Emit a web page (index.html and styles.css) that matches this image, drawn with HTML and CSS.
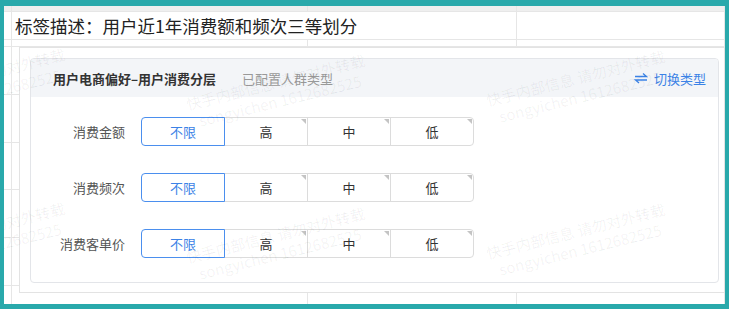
FILE: index.html
```html
<!DOCTYPE html>
<html lang="zh-CN">
  <head>
    <meta charset="UTF-8" />
    <meta name="viewport" content="width=device-width, initial-scale=1.0" />
    <title>标签描述</title>
    <link rel="stylesheet" href="styles.css">
  </head>
  <body>
    <div class="frame">
      <div class="cell top"></div>
      <div class="cell top"></div>
      <div class="cell top"></div>
      <div class="cell top"></div>

      <div class="cell"></div>
      <div class="cell title-cell">标签描述：用户近1年消费额和频次三等划分</div>
      <div class="cell"></div>

      <div class="cell"></div>
      <div class="cell"></div>
      <div class="cell"></div>
      <div class="cell"></div>

      <div class="main-row">
        <div class="rail">
          <div class="rail-row"><span></span><span></span></div>
          <div class="rail-row"><span></span><span></span></div>
          <div class="rail-row"><span></span><span></span></div>
          <div class="rail-row"><span></span><span></span></div>
          <div class="rail-row"><span></span><span></span></div>
          <div class="rail-row"><span></span><span></span></div>
        </div>
        <div class="box">
          <div class="card">
            <div class="card-head">
              <span class="card-title">用户电商偏好–用户消费分层</span>
              <span class="card-sub">已配置人群类型</span>
              <a class="switch">
                <svg width="14" height="12" viewBox="0 0 14 12" fill="none" stroke="currentColor" stroke-width="1.3">
                  <path d="M1 4.5H12.5L9 1.5" />
                  <path d="M13 8H1.5L5 11" />
                </svg>
                切换类型
              </a>
            </div>
            <div class="card-body">
              <div class="field">
                <label class="field-label">消费金额</label>
                <div class="seg">
                  <span class="opt on">不限</span>
                  <span class="opt">高</span>
                  <span class="opt">中</span>
                  <span class="opt last">低</span>
                </div>
              </div>
              <div class="field">
                <label class="field-label">消费频次</label>
                <div class="seg">
                  <span class="opt on">不限</span>
                  <span class="opt">高</span>
                  <span class="opt">中</span>
                  <span class="opt last">低</span>
                </div>
              </div>
              <div class="field">
                <label class="field-label">消费客单价</label>
                <div class="seg">
                  <span class="opt on">不限</span>
                  <span class="opt">高</span>
                  <span class="opt">中</span>
                  <span class="opt last">低</span>
                </div>
              </div>
            </div>
          </div>
        </div>
      </div>

      <div class="cell end"></div>
      <div class="cell end"></div>
      <div class="cell end"></div>
      <div class="cell end"></div>

      <div class="wm w1">快手内部信息 请勿对外转载<br />songyichen 1612682525</div>
      <div class="wm w2">快手内部信息 请勿对外转载<br />songyichen 1612682525</div>
      <div class="wm w3">快手内部信息 请勿对外转载<br />songyichen 1612682525</div>
      <div class="wm w4">快手内部信息 请勿对外转载<br />songyichen 1612682525</div>
      <div class="wm w5">快手内部信息 请勿对外转载<br />songyichen 1612682525</div>
      <div class="wm w6">快手内部信息 请勿对外转载<br />songyichen 1612682525</div>
    </div>
  </body>
</html>
```

FILE: styles.css
```css
* {
  box-sizing: border-box;
}
html,
body {
  height: 100%;
}
body {
  margin: 0;
  padding: 6px 4px 5px 4px;
  background-color: #29a9ab;
  font-family: "Noto Sans CJK SC", "Noto Sans", sans-serif;
  color: #333;
  overflow: hidden;
}
.frame {
  position: relative;
  height: 298px;
  background-color: #fff;
  display: grid;
  grid-template-columns: 8px 296px 209px 1fr;
  grid-template-rows: 6px 28px 7px 246px 11px;
  overflow: hidden;
}
.cell {
  border-right: 1px solid #e6e6e6;
  border-bottom: 1px solid #e6e6e6;
}
.cell.top {
  background-color: #efefef;
}
.cell.end {
  border-bottom: none;
}
.title-cell {
  grid-column: span 2;
  padding-left: 3px;
  font-size: 17.5px;
  line-height: 27px;
  color: #222;
  white-space: nowrap;
}
.main-row {
  grid-column: 1 / -1;
  display: flex;
}
.rail {
  width: 15px;
  display: flex;
  flex-direction: column;
}
.rail-row {
  flex: 1;
  display: flex;
  border-bottom: 1px solid #e6e6e6;
}
.rail-row:last-child {
  flex: 0 0 7px;
  border-bottom: none;
}
.rail-row span:first-child {
  width: 8px;
  border-right: 1px solid #e6e6e6;
}
.box {
  flex: 1;
  border: 1px solid #e3e3e3;
  padding: 10px 5px 9px 10px;
  display: flex;
}
.card {
  flex: 1;
  border: 1px solid #e3e5e9;
  border-radius: 4px;
  display: flex;
  flex-direction: column;
}
.card-head {
  height: 38px;
  background-color: #f3f5f8;
  border-radius: 3px 3px 0 0;
  display: flex;
  align-items: center;
  padding: 0 12px 0 22px;
  font-size: 13px;
}
.card-title {
  font-weight: 700;
  color: #333;
}
.card-sub {
  margin-left: 26px;
  color: #999;
}
.switch {
  margin-left: auto;
  display: flex;
  align-items: center;
  gap: 6px;
  color: #3b82e6;
}
.card-body {
  padding: 20px 0 0 0;
  display: flex;
  flex-direction: column;
  gap: 27px;
}
.field {
  display: flex;
  align-items: center;
  height: 29px;
}
.field-label {
  width: 94px;
  margin-right: 16px;
  text-align: right;
  font-size: 13px;
  color: #555;
}
.seg {
  display: flex;
}
.opt {
  position: relative;
  width: 84px;
  height: 29px;
  margin-left: -1px;
  border: 1px solid #dcdcdc;
  display: flex;
  align-items: center;
  justify-content: center;
  font-size: 13px;
  color: #333;
}
.opt:first-child {
  margin-left: 0;
}
.opt.on {
  z-index: 1;
  border-color: #4b8fee;
  color: #3b82e6;
  border-radius: 4px 0 0 4px;
}
.opt.last {
  border-radius: 0 4px 4px 0;
}
.opt:not(.on)::after {
  content: "";
  position: absolute;
  top: 1px;
  right: 1px;
  width: 5px;
  height: 5px;
  background-color: #c4c4c4;
  clip-path: polygon(0 0, 100% 0, 100% 100%);
}
.wm {
  position: absolute;
  width: 220px;
  height: 40px;
  text-align: center;
  font-size: 15px;
  line-height: 19px;
  color: rgba(0, 0, 0, 0.06);
  transform: rotate(-14deg);
  white-space: nowrap;
  pointer-events: none;
  z-index: 2;
}
.w1 {
  left: -136px;
  top: 60px;
}
.w2 {
  left: 164px;
  top: 66px;
}
.w3 {
  left: 464px;
  top: 62px;
}
.w4 {
  left: -136px;
  top: 214px;
}
.w5 {
  left: 164px;
  top: 219px;
}
.w6 {
  left: 464px;
  top: 215px;
}
```
